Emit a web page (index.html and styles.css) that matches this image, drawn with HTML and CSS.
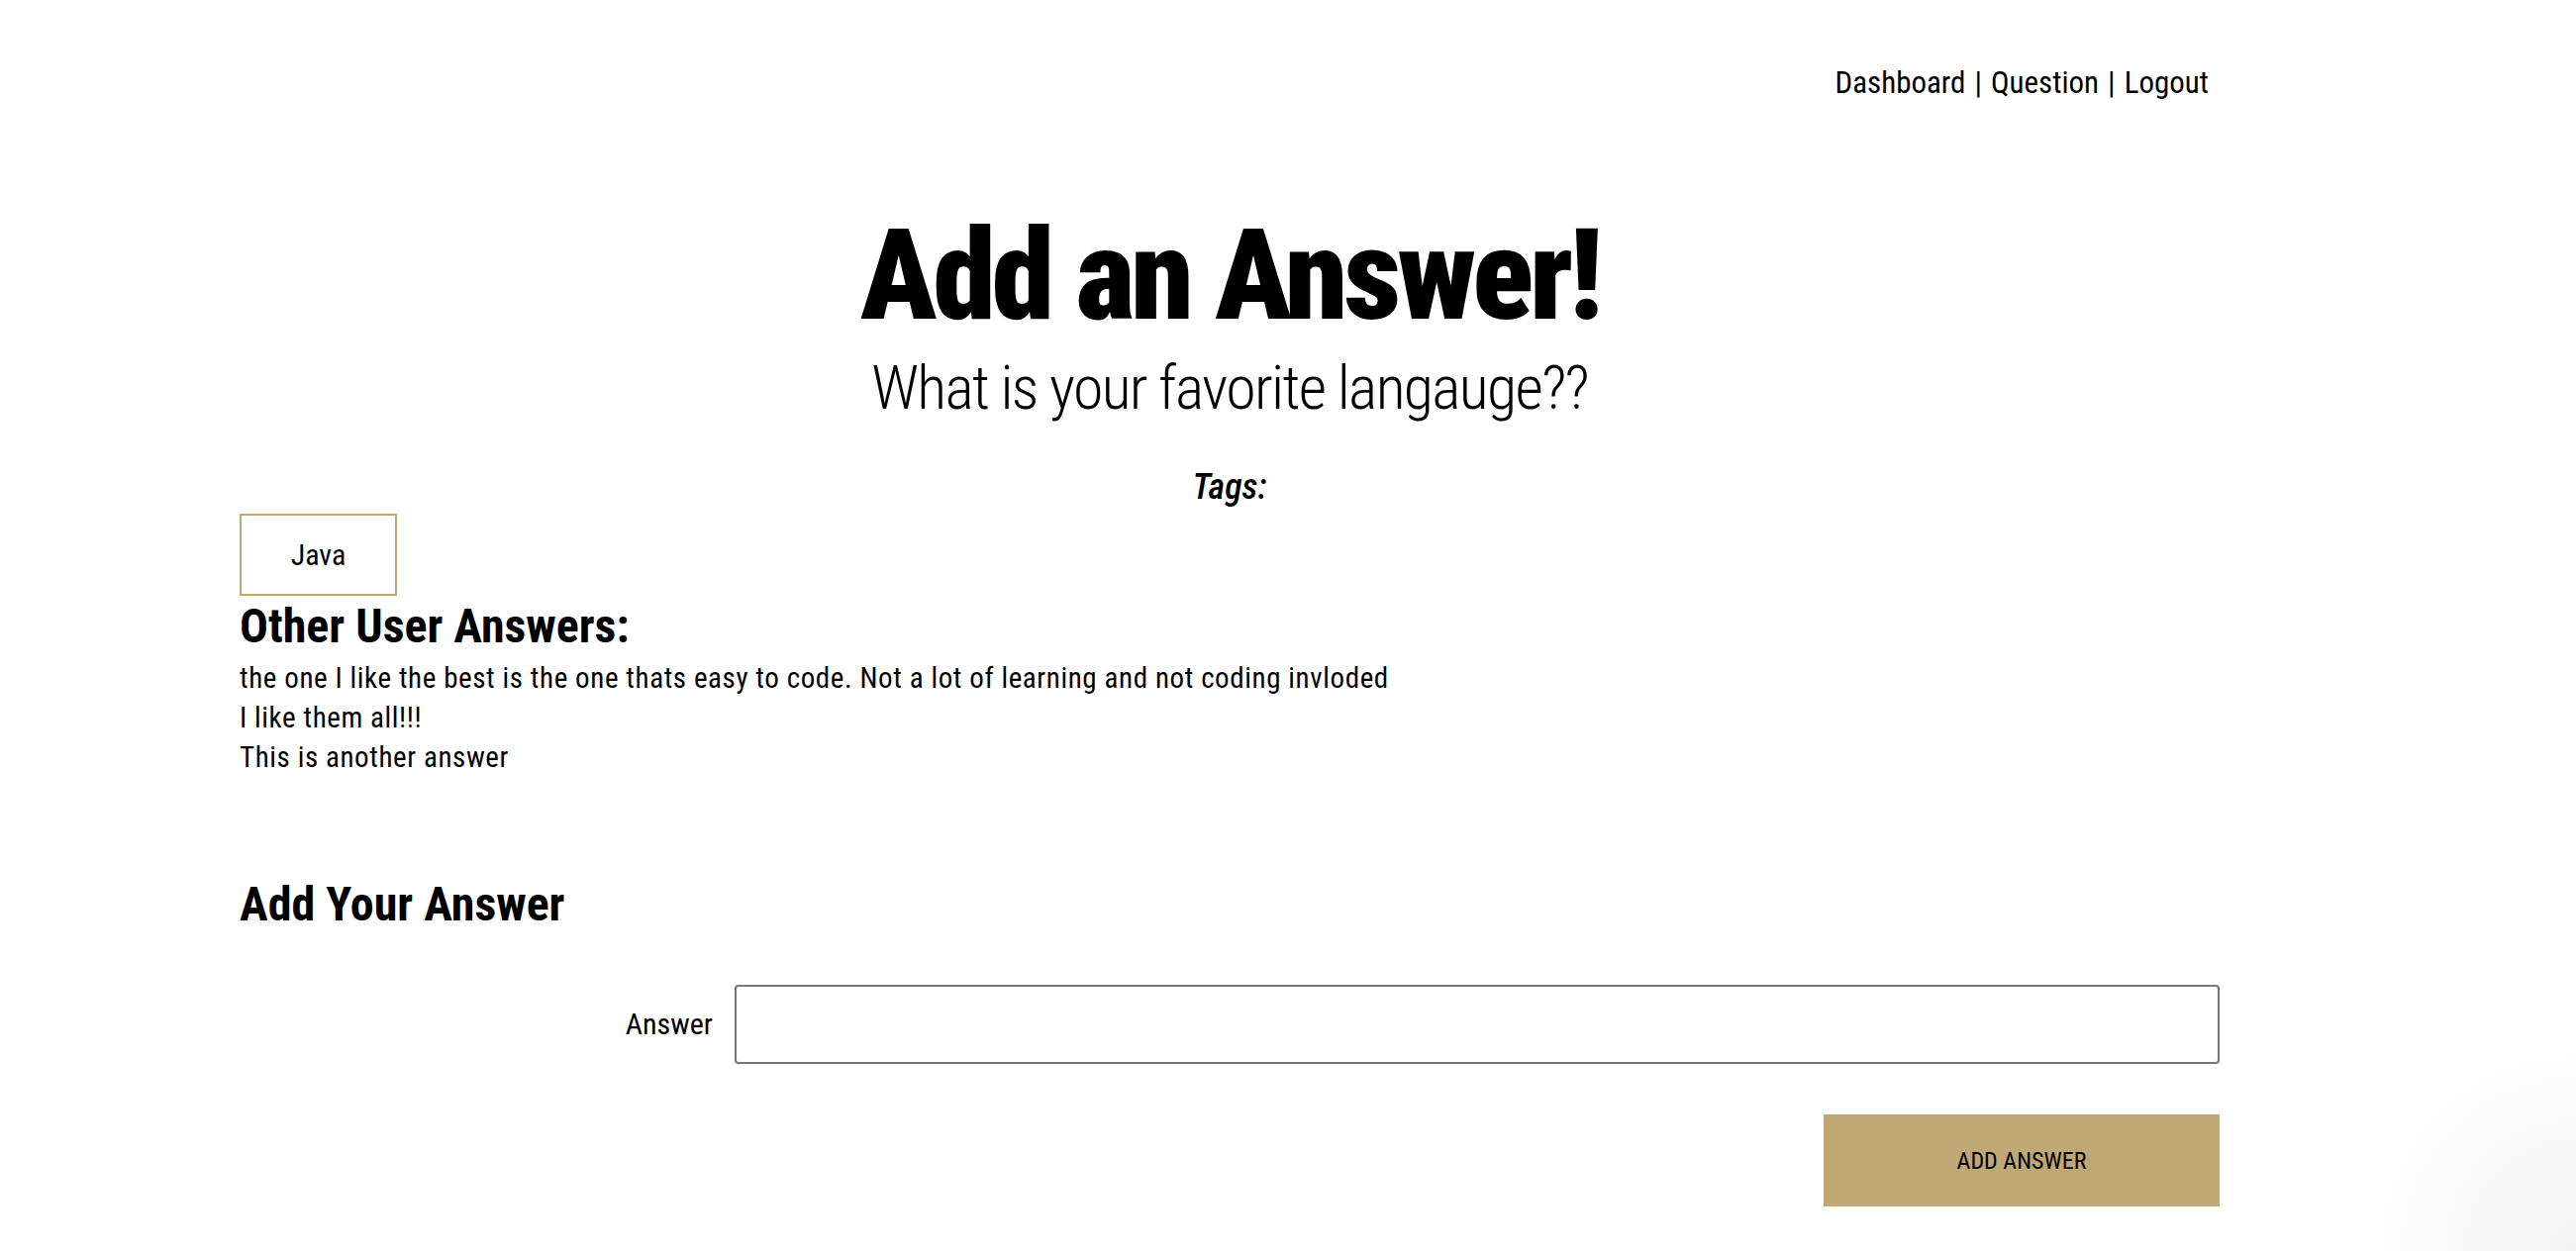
FILE: index.html
```html
<!DOCTYPE html>
<html lang="en">
<head>
<meta charset="utf-8">
<title>Add an Answer</title>
<link rel="stylesheet" href="styles.css">
</head>
<body>
<div class="container">
  <header class="topbar">
    <nav class="nav"><a href="#" class="nav-link">Dashboard</a><span class="nav-sep">|</span><a href="#" class="nav-link">Question</a><span class="nav-sep">|</span><a href="#" class="nav-link">Logout</a></nav>
  </header>

  <h1 class="title">Add an Answer!</h1>
  <p class="question">What is your favorite langauge??</p>
  <p class="tags-label">Tags:</p>
  <div class="tags">
    <span class="tag">Java</span>
  </div>

  <h2 class="section-title">Other User Answers:</h2>
  <ul class="answers">
    <li>the one I like the best is the one thats easy to code. Not a lot of learning and not coding invloded</li>
    <li>I like them all!!!</li>
    <li>This is another answer</li>
  </ul>

  <h2 class="section-title add-title">Add Your Answer</h2>
  <form class="answer-form">
    <div class="form-row">
      <label class="form-label" for="answer">Answer</label>
      <div class="form-field">
        <input id="answer" class="form-input" type="text">
      </div>
    </div>
    <div class="form-actions">
      <button type="button" class="btn-submit">ADD ANSWER</button>
    </div>
  </form>
</div>
</body>
</html>
```

FILE: styles.css
```css
html {
  min-height: 100%;
  background: #ffffff radial-gradient(circle at 100% 100%, rgba(0,0,0,0.045) 0, rgba(0,0,0,0) 230px) no-repeat;
  background-attachment: fixed;
}

body {
  margin: 0;
  font-family: "Roboto Condensed", Roboto, "Liberation Sans", sans-serif;
  font-size: 29px;
  line-height: 40px;
  color: #000;
}

.container {
  width: 2000px;
  margin-left: 242px;
}

.topbar {
  display: flex;
  justify-content: flex-end;
  padding-top: 61px;
  padding-right: 11px;
}

.nav {
  display: flex;
  font-size: 31px;
  line-height: 46px;
}

.nav-link {
  color: #000;
  text-decoration: none;
}

.nav-sep {
  padding: 0 9px;
}

.title {
  margin: 101px 0 0;
  text-align: center;
  font-size: 128px;
  line-height: 141px;
  font-weight: 900;
  letter-spacing: -4px;
}

.question {
  margin: 3px 0 0;
  text-align: center;
  font-size: 62px;
  line-height: 80px;
  font-weight: 300;
  letter-spacing: -1.7px;
}

.tags-label {
  margin: 33px 0 0;
  text-align: center;
  font-size: 36px;
  line-height: 54px;
  font-style: italic;
  font-weight: 500;
}

.tags {
  display: flex;
  gap: 12px;
}

.tag {
  display: inline-flex;
  align-items: center;
  justify-content: center;
  box-sizing: border-box;
  height: 83px;
  min-width: 159px;
  padding: 0 40px;
  border: 2px solid #c0a873;
  font-size: 30px;
}

.section-title {
  margin: 2px 0 0;
  font-size: 48px;
  line-height: 58px;
  font-weight: 700;
}

.answers {
  list-style: none;
  margin: 3px 0 0;
  padding: 0;
  letter-spacing: 0.6px;
}

.add-title {
  margin-top: 100px;
}

.answer-form {
  margin-top: 52px;
}

.form-row {
  display: flex;
  align-items: center;
}

.form-label {
  box-sizing: border-box;
  width: 25%;
  padding-right: 22px;
  text-align: right;
  font-size: 30px;
}

.form-field {
  width: 75%;
}

.form-input {
  display: block;
  box-sizing: border-box;
  width: 100%;
  height: 80px;
  margin: 0;
  border: 2px solid #767676;
  border-radius: 4px;
  background: #fff;
  font: inherit;
}

.form-actions {
  display: flex;
  justify-content: flex-end;
  margin-top: 51px;
}

.btn-submit {
  width: 400px;
  height: 93px;
  border: none;
  background: #bfa874;
  color: #000;
  font-family: inherit;
  font-size: 24px;
  font-weight: 400;
}
```
